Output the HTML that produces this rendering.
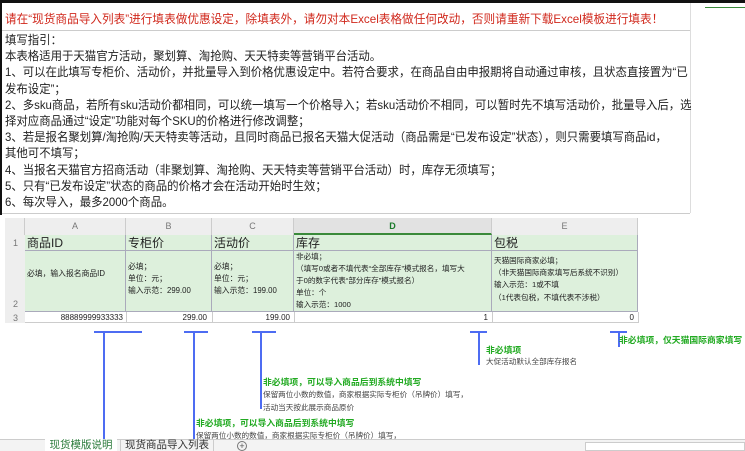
<!DOCTYPE html>
<html><head><meta charset="utf-8"><style>
*{margin:0;padding:0;box-sizing:border-box}
body{width:745px;height:451px;overflow:hidden;background:#fff;position:relative;font-family:"Liberation Sans","Noto Sans CJK SC",sans-serif;color:#222}
.a{position:absolute;white-space:nowrap}
.t{font-size:12px;line-height:16.5px;transform:scaleX(0.95);transform-origin:0 0}
.g{color:#22aa22;font-weight:bold;font-size:8.8px}
.s{color:#444;font-size:7.6px}
.bl{position:absolute;background:#4d6cf2}
.cell{position:absolute;border-right:1px solid #aab;border-bottom:1px solid #aab;background:#ddf0dc;font-size:8px;line-height:12.2px;padding-left:2px;white-space:nowrap;overflow:hidden}
.hd{position:absolute;top:218px;height:17px;background:#eee;border-right:1px solid #ccc;color:#777;font-size:9px;text-align:center;line-height:17px}
</style></head><body>
<div class="a" style="left:0;top:0;width:745px;height:3px;background:#111"></div>
<div class="a" style="left:0;top:0;width:2px;height:215px;background:#111"></div>
<div class="a" style="left:690px;top:3px;width:1px;height:210px;background:#ddd"></div>
<div class="a" style="left:2px;top:30px;width:688px;height:1px;background:#ccc"></div>
<div class="a" style="left:705px;top:7px;width:40px;height:1px;background:#3a8a3a"></div>
<div class="a t" style="left:5px;top:11px;color:#d0281c;transform:scaleX(0.97)">请在“现货商品导入列表”进行填表做优惠设定，除填表外，请勿对本Excel表格做任何改动，否则请重新下载Excel模板进行填表！</div>
<div class="a t" style="left:5px;top:32px;line-height:16.2px">填写指引：<br>本表格适用于天猫官方活动，聚划算、淘抢购、天天特卖等营销平台活动。<br>1、可以在此填写专柜价、活动价，并批量导入到价格优惠设定中。若符合要求，在商品自由申报期将自动通过审核，且状态直接置为“已<br>发布设定”；<br>2、多sku商品，若所有sku活动价都相同，可以统一填写一个价格导入；若sku活动价不相同，可以暂时先不填写活动价，批量导入后，选<br>择对应商品通过“设定”功能对每个SKU的价格进行修改调整；<br>3、若是报名聚划算/淘抢购/天天特卖等活动，且同时商品已报名天猫大促活动（商品需是“已发布设定”状态），则只需要填写商品id，<br>其他可不填写；<br>4、当报名天猫官方招商活动（非聚划算、淘抢购、天天特卖等营销平台活动）时，库存无须填写；<br>5、只有“已发布设定”状态的商品的价格才会在活动开始时生效；<br>6、每次导入，最多2000个商品。</div>
<div class="a" style="left:2px;top:213px;width:688px;height:1px;background:#ccc"></div>

<div class="a" style="left:5px;top:216px;width:635px;height:110px;background:#fff"></div>
<div class="hd" style="left:5px;width:20px"></div>
<div class="hd" style="left:25px;width:101px">A</div>
<div class="hd" style="left:126px;width:86px">B</div>
<div class="hd" style="left:212px;width:82px">C</div>
<div class="hd" style="left:294px;width:198px;background:#e2e2e2;color:#1a7a2a;font-weight:bold;border-bottom:2px solid #3a8a3a">D</div>
<div class="hd" style="left:492px;width:146px">E</div>
<div class="a" style="left:5px;top:235px;width:20px;height:88px;background:#eee;color:#777;font-size:9px">
<div class="a" style="left:8px;top:3px">1</div><div class="a" style="left:8px;top:64px">2</div><div class="a" style="left:8px;top:78px">3</div></div>
<div class="cell" style="left:25px;top:235px;width:101px;height:16px;font-size:12px;line-height:16px">商品ID</div>
<div class="cell" style="left:126px;top:235px;width:86px;height:16px;font-size:12px;line-height:16px">专柜价</div>
<div class="cell" style="left:212px;top:235px;width:82px;height:16px;font-size:12px;line-height:16px">活动价</div>
<div class="cell" style="left:294px;top:235px;width:198px;height:16px;font-size:12px;line-height:16px">库存</div>
<div class="cell" style="left:492px;top:235px;width:146px;height:16px;font-size:12px;line-height:16px">包税</div>
<div class="cell" style="left:25px;top:251px;width:101px;height:61px;padding-top:17px;font-size:7.8px">必填，输入报名商品ID</div>
<div class="cell" style="left:126px;top:251px;width:86px;height:61px;padding-top:10px;font-size:7.8px">必填；<br>单位：元；<br>输入示范：299.00</div>
<div class="cell" style="left:212px;top:251px;width:82px;height:61px;padding-top:10px;font-size:7.8px">必填；<br>单位：元；<br>输入示范：199.00</div>
<div class="cell" style="left:294px;top:251px;width:198px;height:61px;padding-top:0;font-size:7.6px;line-height:12px">非必填；<br>（填写0或者不填代表“全部库存”模式报名，填写大<br>于0的数字代表“部分库存”模式报名）<br>单位：个<br>输入示范：1000</div>
<div class="cell" style="left:492px;top:251px;width:146px;height:61px;padding-top:4px;font-size:7.6px">天猫国际商家必填；<br>（非天猫国际商家填写后系统不识别）<br>输入示范：1或不填<br>（1代表包税，不填代表不涉税）</div>
<div class="a" style="left:25px;top:312px;width:613px;height:11px;border-bottom:1px solid #ccc;font-size:8px;line-height:11px">
<span class="a" style="right:515px">88889999933333</span><span class="a" style="right:431px">299.00</span><span class="a" style="right:348px">199.00</span><span class="a" style="right:150px">1</span><span class="a" style="right:4px">0</span></div>
<div class="a" style="left:126px;top:312px;width:1px;height:11px;background:#ccc"></div>
<div class="a" style="left:212px;top:312px;width:1px;height:11px;background:#ccc"></div>
<div class="a" style="left:294px;top:312px;width:1px;height:11px;background:#ccc"></div>
<div class="a" style="left:492px;top:312px;width:1px;height:11px;background:#ccc"></div>
<div class="a" style="left:638px;top:312px;width:1px;height:11px;background:#ccc"></div>

<div class="bl" style="left:94px;top:331px;width:48px;height:2px"></div><div class="bl" style="left:103px;top:331px;width:2px;height:108px"></div>
<div class="bl" style="left:184px;top:331px;width:24px;height:2px"></div><div class="bl" style="left:193px;top:331px;width:2px;height:108px"></div>
<div class="bl" style="left:252px;top:331px;width:24px;height:2px"></div><div class="bl" style="left:260px;top:331px;width:2px;height:78px"></div>
<div class="bl" style="left:470px;top:331px;width:17px;height:2px"></div><div class="bl" style="left:478px;top:331px;width:2px;height:34px"></div>
<div class="bl" style="left:610px;top:331px;width:17px;height:2px"></div><div class="bl" style="left:618px;top:331px;width:2px;height:16px"></div>
<div class="a g" style="left:619px;top:333px">非必填项，仅天猫国际商家填写</div>
<div class="a g" style="left:486px;top:343px">非必填项</div>
<div class="a s" style="left:486px;top:356px">大促活动默认全部库存报名</div>
<div class="a g" style="left:263px;top:375px">非必填项，可以导入商品后到系统中填写</div>
<div class="a s" style="left:263px;top:389px">保留两位小数的数值，商家根据实际专柜价（吊牌价）填写，</div>
<div class="a s" style="left:263px;top:402px">活动当天按此展示商品原价</div>
<div class="a g" style="left:196px;top:416px">非必填项，可以导入商品后到系统中填写</div>
<div class="a s" style="left:196px;top:430px">保留两位小数的数值，商家根据实际专柜价（吊牌价）填写，</div>

<div class="a" style="left:0;top:439px;width:745px;height:12px;background:#f3f3f3;border-top:1px solid #ccc"></div>
<div class="a" style="left:45px;top:439px;width:72px;height:12px;background:#fff;color:#2a7a3a;font-size:10.5px;line-height:12px;text-align:center">现货模版说明</div>
<div class="a" style="left:120px;top:440px;width:94px;height:11px;color:#333;font-size:10.5px;line-height:11px;text-align:center;border-left:1px solid #ccc;border-right:1px solid #ccc">现货商品导入列表</div>
<div class="a" style="left:237px;top:441px;width:10px;height:10px;border:1px solid #777;border-radius:50%;font-size:9px;line-height:8px;text-align:center;color:#555">+</div>
<div class="a" style="left:585px;top:442px;width:160px;height:9px;background:#fff;border:1px solid #ccc"></div>
</body></html>
